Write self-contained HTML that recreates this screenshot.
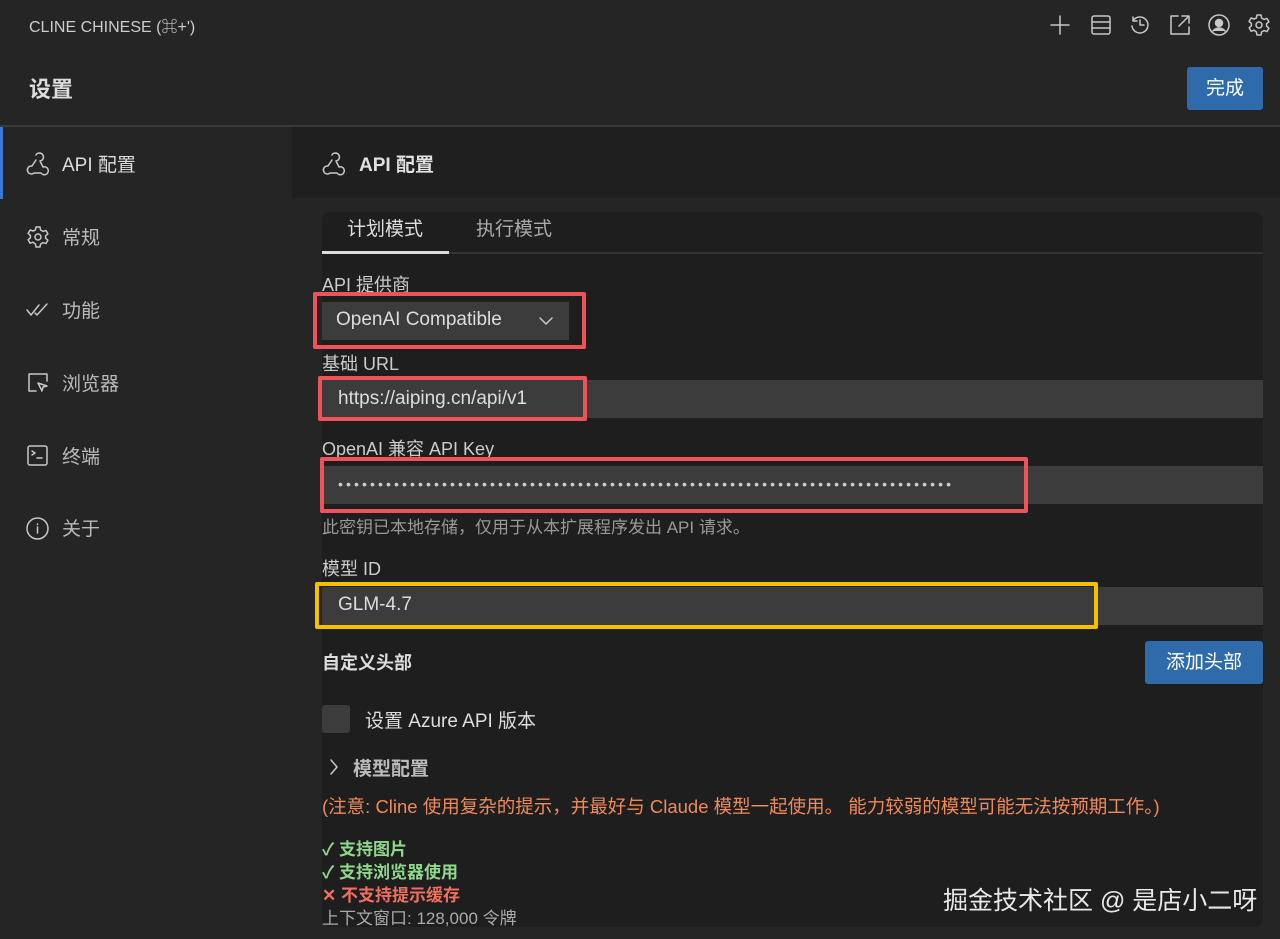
<!DOCTYPE html>
<html><head><meta charset="utf-8"><style>
*{margin:0;padding:0;box-sizing:border-box}
body{width:1280px;height:939px;background:#252525;font-family:"Liberation Sans","Noto Sans CJK SC",sans-serif;color:#ccc;position:relative;overflow:hidden}
.a{position:absolute}
.t{white-space:nowrap}
svg{position:absolute;fill:none;stroke:#c8c8c8;stroke-width:1.5;stroke-linecap:round;stroke-linejoin:round}
.inp{position:absolute;background:#3c3c3c;height:38px;left:322px;width:941px}
.box{position:absolute;border:4px solid #f0525a;border-radius:2px}
</style></head><body>
<div class="a t" style="left:29px;top:13px;font-size:16px;color:#ccc">CLINE CHINESE (⌘+')</div>
<svg style="left:1049px;top:14px" width="22" height="22" viewBox="0 0 22 22"><path d="M11 2v18M2 11h18"/></svg>
<svg style="left:1090px;top:14px" width="22" height="22" viewBox="0 0 22 22"><rect x="2" y="2" width="18" height="18" rx="2"/><path d="M2 8h18M2 14h18"/></svg>
<svg style="left:1129px;top:14px" width="22" height="22" viewBox="0 0 22 22"><path d="M4 7a8 8 0 1 1-1 5M4 3v4h4M11 6v5h4"/></svg>
<svg style="left:1168px;top:13px" width="24" height="24" viewBox="0 0 24 24"><path d="M10 3H3v18h18v-7M14 3h7v7M21 3l-10 10"/></svg>
<svg style="left:1207px;top:13px" width="24" height="24" viewBox="0 0 24 24"><circle cx="12" cy="12" r="10"/><circle cx="12" cy="10" r="3.5" fill="#c8c8c8"/><path d="M6 18c3-4 9-4 12 0" fill="#c8c8c8"/></svg>
<svg style="left:1247px;top:13px" width="24" height="24" viewBox="0 0 24 24"><circle cx="12" cy="12" r="3"/><path d="M10 2h4l.6 3 2.4 1.4 2.9-1 2 3.4-2.3 2v2.4l2.3 2-2 3.4-2.9-1-2.4 1.4-.6 3h-4l-.6-3L7 17.2l-2.9 1-2-3.4 2.3-2v-2.4l-2.3-2 2-3.4 2.9 1L9.4 5z"/></svg>
<div class="a t" style="left:29px;top:72px;font-size:22px;font-weight:bold;color:#ddd">设置</div>
<div class="a" style="left:1187px;top:67px;width:76px;height:43px;background:#2f6bab;border-radius:3px;color:#fff;font-size:19px;text-align:center;line-height:43px">完成</div>
<div class="a" style="left:0;top:125px;width:1280px;height:2px;background:#3a3a3a"></div>
<div class="a" style="left:0;top:127px;width:3px;height:72px;background:#3b7ad0"></div>
<svg style="left:25px;top:151px" width="26" height="26" viewBox="0 0 26 26"><path d="M11 4a4 4 0 1 1 4 6l3 6M18 16a4 4 0 1 1-2 6H9M9 22a4 4 0 1 1-2-7l4-6"/></svg>
<div class="a t" style="left:62px;top:150px;font-size:19px;color:#ddd">API 配置</div>
<svg style="left:26px;top:225px" width="24" height="24" viewBox="0 0 24 24"><circle cx="12" cy="12" r="3"/><path d="M10 2h4l.6 3 2.4 1.4 2.9-1 2 3.4-2.3 2v2.4l2.3 2-2 3.4-2.9-1-2.4 1.4-.6 3h-4l-.6-3L7 17.2l-2.9 1-2-3.4 2.3-2v-2.4l-2.3-2 2-3.4 2.9 1L9.4 5z"/></svg>
<div class="a t" style="left:62px;top:223px;font-size:19px;color:#bbb">常规</div>
<svg style="left:25px;top:300px" width="26" height="20" viewBox="0 0 26 20"><path d="M2 10l4 5 8-10M10 13l2 2 10-11"/></svg>
<div class="a t" style="left:62px;top:296px;font-size:19px;color:#bbb">功能</div>
<svg style="left:26px;top:371px" width="24" height="24" viewBox="0 0 24 24"><path d="M10 20H3V3h18v7"/><path d="M12 12l9 3-4 1-1 4z"/></svg>
<div class="a t" style="left:62px;top:369px;font-size:19px;color:#bbb">浏览器</div>
<svg style="left:26px;top:444px" width="24" height="24" viewBox="0 0 24 24"><rect x="2" y="2" width="19" height="19" rx="2"/><path d="M6 7l3 2-3 2M11 14h5"/></svg>
<div class="a t" style="left:62px;top:442px;font-size:19px;color:#bbb">终端</div>
<svg style="left:25px;top:516px" width="25" height="25" viewBox="0 0 25 25"><circle cx="12.5" cy="12.5" r="10.5"/><path d="M12.5 11v6M12.5 8v.5"/></svg>
<div class="a t" style="left:62px;top:514px;font-size:19px;color:#bbb">关于</div>
<div class="a" style="left:292px;top:127px;width:988px;height:71px;background:#1f1f1f"></div>
<svg style="left:321px;top:151px" width="26" height="26" viewBox="0 0 26 26"><path d="M11 4a4 4 0 1 1 4 6l3 6M18 16a4 4 0 1 1-2 6H9M9 22a4 4 0 1 1-2-7l4-6"/></svg>
<div class="a t" style="left:359px;top:150px;font-size:19px;font-weight:bold;color:#e0e0e0">API 配置</div>
<div class="a" style="left:322px;top:212px;width:941px;height:715px;background:#1e1e1e;border-radius:8px"></div>
<div class="a t" style="left:347px;top:214px;font-size:19px;color:#ddd">计划模式</div>
<div class="a t" style="left:476px;top:214px;font-size:19px;color:#aaa">执行模式</div>
<div class="a" style="left:322px;top:252px;width:941px;height:2px;background:#333"></div>
<div class="a" style="left:322px;top:251px;width:127px;height:3px;background:#ddd"></div>
<div class="a t" style="left:322px;top:271px;font-size:18px;color:#ccc">API 提供商</div>
<div class="a" style="left:322px;top:302px;width:247px;height:38px;background:#3c3c3c"></div>
<div class="a t" style="left:336px;top:309px;font-size:19px;color:#ddd">OpenAI Compatible</div>
<svg style="left:538px;top:315px" width="16" height="12" viewBox="0 0 16 12"><path d="M2 3l6 6 6-6"/></svg>
<div class="box" style="left:313px;top:292px;width:273px;height:57px"></div>
<div class="a t" style="left:322px;top:350px;font-size:18px;color:#ccc">基础 URL</div>
<div class="inp" style="top:380px"></div>
<div class="a t" style="left:338px;top:388px;font-size:19px;color:#ddd">https://aiping.cn/api/v1</div>
<div class="box" style="left:318px;top:376px;width:269px;height:45px"></div>
<div class="a t" style="left:322px;top:435px;font-size:18px;color:#ccc">OpenAI 兼容 API Key</div>
<div class="inp" style="top:466px"></div>
<div class="a t" style="left:338px;top:476px;font-size:14px;color:#ccc;letter-spacing:3.1px">•••••••••••••••••••••••••••••••••••••••••••••••••••••••••••••••••••••••••••••</div>
<div class="box" style="left:320px;top:457px;width:708px;height:56px"></div>
<div class="a t" style="left:322px;top:513px;font-size:17px;color:#999">此密钥已本地存储，仅用于从本扩展程序发出 API 请求。</div>
<div class="a t" style="left:322px;top:555px;font-size:18px;color:#ccc">模型 ID</div>
<div class="inp" style="top:587px"></div>
<div class="a t" style="left:338px;top:594px;font-size:19px;color:#ddd">GLM-4.7</div>
<div class="box" style="left:315px;top:582px;width:783px;height:47px;border-color:#f5c000"></div>
<div class="a t" style="left:322px;top:649px;font-size:18px;color:#ddd;font-weight:bold">自定义头部</div>
<div class="a" style="left:1145px;top:641px;width:118px;height:43px;background:#2f6bab;border-radius:3px;color:#fff;font-size:19px;text-align:center;line-height:43px">添加头部</div>
<div class="a" style="left:322px;top:705px;width:28px;height:28px;background:#3c3c3c;border-radius:3px"></div>
<div class="a t" style="left:365px;top:706px;font-size:19px;color:#ddd">设置 Azure API 版本</div>
<svg style="left:328px;top:758px" width="12" height="18" viewBox="0 0 12 18"><path d="M3 2l6 7-6 7"/></svg>
<div class="a t" style="left:353px;top:754px;font-size:19px;color:#bbb;font-weight:bold">模型配置</div>
<div class="a t" style="left:322px;top:793px;font-size:18.5px;color:#ee8a5e">(注意: Cline 使用复杂的提示，并最好与 Claude 模型一起使用。 能力较弱的模型可能无法按预期工作。)</div>
<div class="a t" style="left:322px;top:835px;font-size:17px;color:#8fd88b;font-weight:bold">✓ 支持图片</div>
<div class="a t" style="left:322px;top:858px;font-size:17px;color:#8fd88b;font-weight:bold">✓ 支持浏览器使用</div>
<div class="a t" style="left:322px;top:881px;font-size:17px;color:#ee7060;font-weight:bold">✕ 不支持提示缓存</div>
<div class="a t" style="left:322px;top:904px;font-size:17px;color:#aaa">上下文窗口: 128,000 令牌</div>
<div class="a t" style="left:943px;top:881px;font-size:25px;color:#e8e8e8">掘金技术社区 @ 是店小二呀</div>
</body></html>
